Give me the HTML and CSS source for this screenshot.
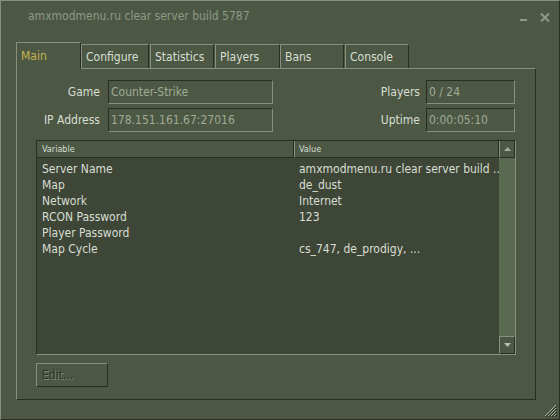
FILE: index.html
```html
<!DOCTYPE html>
<html>
<head>
<meta charset="utf-8">
<link rel="stylesheet" href="styles.css">
</head>
<body>
<div class="window">
  <div class="titlebar">
    <div class="title">amxmodmenu.ru clear server build 5787</div>
    <div class="title-buttons">
      <svg class="btn-min" width="8" height="9" viewBox="0 0 8 9"><rect x="0" y="6" width="7" height="2" fill="#8e9a84"/></svg>
      <svg class="btn-close" width="10" height="9" viewBox="0 0 10 9"><path d="M1 0.5 L9 8.5 M9 0.5 L1 8.5" stroke="#8e9a84" stroke-width="2"/></svg>
    </div>
  </div>
  <div class="tabs">
    <div class="tab active t-main">Main</div>
    <div class="tab t-conf">Configure</div>
    <div class="tab t-stat">Statistics</div>
    <div class="tab t-play">Players</div>
    <div class="tab t-bans">Bans</div>
    <div class="tab t-cons">Console</div>
  </div>
  <div class="panel">
    <div class="fields">
      <div class="label l1">Game</div>
      <div class="field">Counter-Strike</div>
      <div class="label l2">Players</div>
      <div class="field">0 / 24</div>
      <div class="label l1">IP Address</div>
      <div class="field">178.151.161.67:27016</div>
      <div class="label l2">Uptime</div>
      <div class="field">0:00:05:10</div>
    </div>
    <div class="list">
      <div class="list-header">
        <div class="hcell hvar">Variable</div>
        <div class="hcell hval">Value</div>
        <div class="hcell hscroll">
          <svg width="7" height="4" viewBox="0 0 7 4"><path d="M3.5 0 L7 4 L0 4 Z" fill="#a3ad97"/></svg>
        </div>
      </div>
      <div class="list-body">
        <div class="rows">
          <div class="row"><span class="c1">Server Name</span><span class="c2">amxmodmenu.ru clear server build ..</span></div>
          <div class="row"><span class="c1">Map</span><span class="c2">de_dust</span></div>
          <div class="row"><span class="c1">Network</span><span class="c2">Internet</span></div>
          <div class="row"><span class="c1">RCON Password</span><span class="c2">123</span></div>
          <div class="row"><span class="c1">Player Password</span><span class="c2"></span></div>
          <div class="row"><span class="c1">Map Cycle</span><span class="c2">cs_747, de_prodigy, ...</span></div>
        </div>
        <div class="scrollbar">
          <div class="track"></div>
          <div class="sbtn">
            <svg width="7" height="4" viewBox="0 0 7 4"><path d="M0 0 L7 0 L3.5 4 Z" fill="#b4bcaa"/></svg>
          </div>
        </div>
      </div>
    </div>
    <div class="button-row">
      <div class="button disabled">Edit...</div>
    </div>
  </div>
  <svg class="grip" width="13" height="13" viewBox="0 0 13 13">
    <path d="M12 1 L1 12 M12 4 L4 12 M12 7 L7 12 M12 10 L10 12" stroke="#a9b29e" stroke-width="1"/>
    <path d="M13 2 L2 13 M13 5 L5 13 M13 8 L8 13 M13 11 L11 13" stroke="#2a3024" stroke-width="1"/>
  </svg>
</div>
</body>
</html>
```
FILE: styles.css
```css
* { box-sizing: border-box; }
html, body { margin: 0; padding: 0; background: #4c5844; }
body {
  font-family: "DejaVu Sans Condensed", "DejaVu Sans", sans-serif;
  font-size: 12px;
  color: #d8ded3;
}
.window {
  position: relative;
  width: 560px;
  height: 420px;
  background: #4c5844;
  border-top: 1px solid #889180;
  border-left: 1px solid #889180;
  border-right: 1px solid #282e22;
  border-bottom: 1px solid #282e22;
  display: flex;
  flex-direction: column;
}
.titlebar {
  height: 41px;
  display: flex;
  align-items: flex-start;
  flex-shrink: 0;
}
.title {
  padding: 8px 0 0 27px;
  line-height: 14px;
  color: #8e9a84;
  flex: 1;
}
.title-buttons {
  display: flex;
  gap: 12px;
  padding: 12px 9px 0 0;
}
.tabs {
  display: flex;
  align-items: flex-end;
  height: 26px;
  margin-left: 15px;
  flex-shrink: 0;
}
.tab {
  height: 24px;
  border-top: 1px solid #889180;
  border-left: 1px solid #889180;
  border-right: 1px solid #282e22;
  padding-left: 4px;
  line-height: 24px;
  color: #d8ded3;
  background: #4c5844;
}
.tab.active {
  height: 27px;
  margin-bottom: -1px;
  position: relative;
  z-index: 1;
  color: #c4b550;
  line-height: 27px;
}
.t-main { width: 65px; }
.t-conf { width: 68px; }
.t-stat { width: 64px; margin-left: 1px; }
.t-play { width: 65px; margin-left: 1px; }
.t-bans { width: 64px; }
.t-cons { width: 64px; margin-left: 1px; }
.panel {
  flex: 1;
  margin: 0 23px 19px 15px;
  border-top: 1px solid #889180;
  border-left: 1px solid #889180;
  border-right: 1px solid #282e22;
  border-bottom: 1px solid #282e22;
  display: flex;
  flex-direction: column;
}
.fields {
  display: grid;
  grid-template-columns: 91px 165px 153px 89px;
  grid-auto-rows: 24px;
  row-gap: 4px;
  margin-top: 11px;
}
.label {
  text-align: right;
  line-height: 25px;
}
.l1 { padding-right: 8px; }
.l2 { padding-right: 6px; }
.field {
  border-top: 1px solid #282e22;
  border-left: 1px solid #282e22;
  border-right: 1px solid #889180;
  border-bottom: 1px solid #889180;
  color: #a0aa95;
  padding-left: 2px;
  line-height: 22px;
}
.list {
  margin: 8px 0 0 19px;
  width: 480px;
  height: 215px;
  background: #3e4637;
  border-top: 1px solid #282e22;
  border-left: 1px solid #282e22;
  border-right: 1px solid #889180;
  border-bottom: 1px solid #889180;
  display: flex;
  flex-direction: column;
}
.list-header {
  display: flex;
  height: 17px;
  flex-shrink: 0;
}
.hcell {
  background: #4c5844;
  border-left: 1px solid #889180;
  border-right: 1px solid #282e22;
  border-bottom: 1px solid #282e22;
  font-size: 9px;
  line-height: 16px;
  padding-left: 4px;
  color: #d8ded3;
}
.hvar { width: 257px; border-left: none; padding-left: 5px; }
.hval { width: 205px; }
.hscroll {
  width: 16px;
  padding: 0;
  display: flex;
  align-items: center;
  justify-content: center;
}
.list-body {
  flex: 1;
  display: flex;
}
.rows {
  width: 462px;
  padding-top: 3px;
}
.row {
  display: grid;
  grid-template-columns: 257px 205px;
  height: 16px;
  line-height: 16px;
}
.c1 { padding-left: 5px; white-space: nowrap; }
.c2 { padding-left: 5px; white-space: nowrap; overflow: hidden; }
.scrollbar {
  width: 16px;
  display: flex;
  flex-direction: column;
}
.track {
  flex: 1;
  background: #5a6a50;
}
.sbtn {
  height: 18px;
  background: #4c5844;
  border-top: 1px solid #889180;
  border-left: 1px solid #889180;
  border-right: 1px solid #282e22;
  border-bottom: 1px solid #282e22;
  display: flex;
  align-items: center;
  justify-content: center;
}
.button-row {
  margin: 8px 0 0 19px;
}
.button {
  width: 72px;
  height: 24px;
  border-top: 1px solid #889180;
  border-left: 1px solid #889180;
  border-right: 1px solid #282e22;
  border-bottom: 1px solid #282e22;
  padding-left: 5px;
  line-height: 22px;
}
.button.disabled {
  color: #2f3629;
  text-shadow: 1px 1px 0 #7c8772;
}
.grip {
  position: absolute;
  right: 2px;
  bottom: 2px;
}
```
